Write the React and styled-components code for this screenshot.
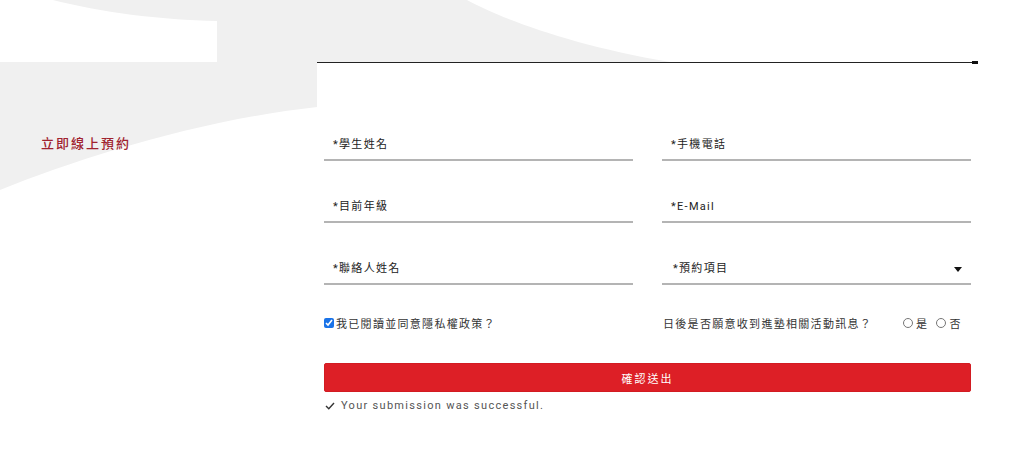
import { createGlobalStyle, styled } from "styled-components";

const GlobalStyle = createGlobalStyle`
	* {
		box-sizing: border-box;
	}
	body {
		margin: 0;
		background: #ffffff;
		font-family: Roboto, "Noto Sans CJK TC", sans-serif;
		color: #222222;
	}
`;

export default function App() {
	return (
		<>
			<GlobalStyle />
			<Page>
				<Backdrop viewBox="0 0 1024 462" preserveAspectRatio="none">
					<path
						d="M53,0 C100,12 160,20 217,21 L217,62 L0,62 L0,190 C80,158 200,120 317,107 L317,62 L670,62 C570,45 500,18 467,0 Z"
						fill="#f0f0f0"
					/>
				</Backdrop>
				<TopBand />
				<Rule />
				<Content>
					<Aside>
						<Title>立即線上預約</Title>
					</Aside>
					<FormArea>
						<Fields>
							<Field>
								<Label>*學生姓名</Label>
							</Field>
							<Field>
								<Label>*手機電話</Label>
							</Field>
							<Field>
								<Label>*目前年級</Label>
							</Field>
							<Field>
								<Label>*E-Mail</Label>
							</Field>
							<Field>
								<Label>*聯絡人姓名</Label>
							</Field>
							<Field $select>
								<Label>*預約項目</Label>
								<Caret viewBox="0 0 8 5">
									<polygon points="0,0 8,0 4,5" fill="#111" />
								</Caret>
							</Field>
						</Fields>
						<Options>
							<Agree>
								<input type="checkbox" defaultChecked />
								<span>我已閱讀並同意隱私權政策？</span>
							</Agree>
							<Consent>
								<span>日後是否願意收到進塾相關活動訊息？</span>
								<Radios>
									<RadioLabel>
										<input type="radio" name="news" />
										是
									</RadioLabel>
									<RadioLabel>
										<input type="radio" name="news" />
										否
									</RadioLabel>
								</Radios>
							</Consent>
						</Options>
						<Submit>確認送出</Submit>
						<Success>
							<svg width="10" height="8" viewBox="0 0 10 8">
								<polyline points="1,4 3.8,6.8 9,1" fill="none" stroke="#333" strokeWidth="1.4" />
							</svg>
							<span>Your submission was successful.</span>
						</Success>
					</FormArea>
				</Content>
			</Page>
		</>
	);
}

const Page = styled.div`
	position: relative;
	width: 1024px;
	height: 462px;
	overflow: hidden;
	background: #ffffff;
`;

const Backdrop = styled.svg`
	position: absolute;
	inset: 0;
	width: 1024px;
	height: 462px;
	z-index: 0;
`;

const TopBand = styled.div`
	height: 62px;
`;

const Rule = styled.div`
	position: relative;
	z-index: 1;
	margin-left: 317px;
	width: 661px;
	height: 1px;
	background: #222;
	&::after {
		content: "";
		position: absolute;
		right: 0;
		top: -1px;
		width: 6px;
		height: 3px;
		background: #111;
	}
`;

const Content = styled.div`
	position: relative;
	z-index: 1;
	display: flex;
`;

const Aside = styled.div`
	width: 317px;
	padding: 72px 0 0 41px;
`;

const Title = styled.h2`
	margin: 0;
	font-size: 13px;
	line-height: 18px;
	font-weight: 500;
	letter-spacing: 2px;
	color: #a0232f;
`;

const FormArea = styled.div`
	width: 647px;
	margin-left: 7px;
	padding-top: 58px;
	font-size: 11px;
	letter-spacing: 1.3px;
`;

const Fields = styled.div`
	display: grid;
	grid-template-columns: 309px 309px;
	column-gap: 29px;
	row-gap: 22px;
`;

const Field = styled.div`
	height: 40px;
	display: flex;
	align-items: flex-end;
	justify-content: space-between;
	padding: 0 9px 4px ${(p) => (p.$select ? "11px" : "9px")};
	border-bottom: 2px solid #b4b4b4;
`;

const Label = styled.span`
	line-height: 20px;
	color: #222;
`;

const Caret = styled.svg`
	width: 8px;
	height: 5px;
	margin-bottom: 7px;
`;

const Options = styled.div`
	display: grid;
	grid-template-columns: 309px 309px;
	column-gap: 29px;
	margin-top: 28px;
	height: 20px;
	align-items: center;
	color: #333;
`;

const Agree = styled.label`
	display: flex;
	align-items: center;
	gap: 2px;
	input {
		width: 10px;
		height: 10px;
		margin: 0;
		accent-color: #1a73e8;
	}
`;

const Consent = styled.div`
	display: flex;
	align-items: center;
	padding-left: 1px;
	gap: 31px;
`;

const Radios = styled.div`
	display: flex;
	gap: 8px;
`;

const RadioLabel = styled.label`
	display: flex;
	align-items: center;
	gap: 3px;
	input {
		width: 10px;
		height: 10px;
		margin: 0;
	}
`;

const Submit = styled.button`
	display: block;
	width: 647px;
	height: 29px;
	margin-top: 30px;
	border: 1px solid #d21c22;
	border-radius: 2px;
	background: #dd1f26;
	color: #ffffff;
	font-family: inherit;
	font-size: 11px;
	letter-spacing: 2px;
	cursor: pointer;
`;

const Success = styled.div`
	display: flex;
	align-items: center;
	gap: 6px;
	margin-top: 6px;
	padding-left: 1px;
	line-height: 16px;
	color: #555;
`;
